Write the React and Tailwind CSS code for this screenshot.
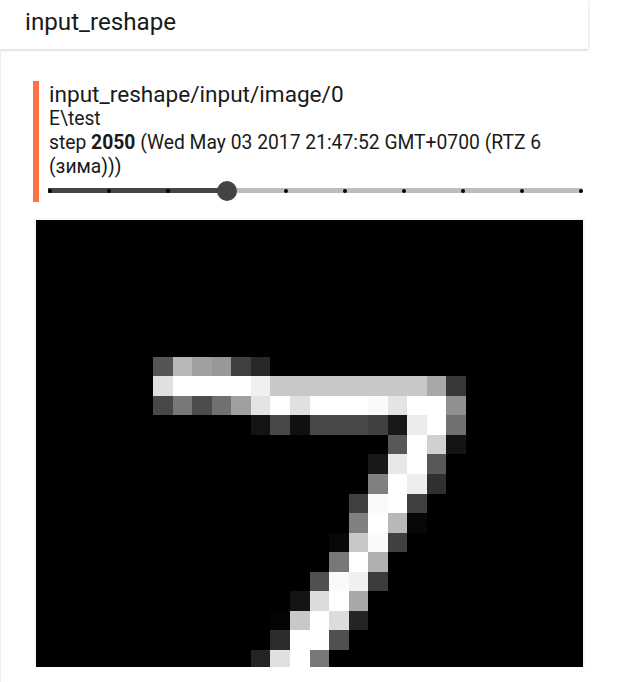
const rows = {
  7: [6, ['55', 'b8', 'a0', '98', '40', '28']],
  8: [6, ['e0', 'ff', 'ff', 'ff', 'ff', 'f0', 'c8', 'c8', 'c8', 'c8', 'c8', 'c8', 'c8', 'c8', 'a8', '38']],
  9: [6, ['48', '78', '4c', '70', 'a0', 'e4', 'ff', 'e0', 'ff', 'ff', 'ff', 'fa', 'e4', 'ff', 'ff', '90']],
  10: [11, ['14', '48', '10', '48', '48', '48', '40', '18', 'ec', 'ff', '70']],
  11: [18, ['58', 'ff', 'd0', '14']],
  12: [17, ['18', 'e8', 'ff', '58']],
  13: [17, ['80', 'ff', 'ee', '30']],
  14: [16, ['40', 'fa', 'ff', '40']],
  15: [16, ['80', 'ff', 'b8', '08']],
  16: [15, ['08', 'c8', 'fa', '40']],
  17: [15, ['78', 'ff', 'b0']],
  18: [14, ['50', 'fa', 'f0', '3c']],
  19: [13, ['14', 'dc', 'ff', 'a8']],
  20: [12, ['04', 'c8', 'ff', 'dc', '24']],
  21: [12, ['2c', 'ff', 'ff', '50']],
  22: [11, ['24', 'e0', 'ff', '78']],
};

function Digit() {
  const cell = 547 / 28;
  return (
    <svg width="547" height="447" viewBox="0 0 547 447" shapeRendering="crispEdges" className="block bg-black">
      {Object.entries(rows).map(([row, [start, values]]) =>
        values.map((v, i) => (
          <rect
            key={row + '-' + i}
            x={(start + i) * cell}
            y={row * cell}
            width={cell}
            height={cell}
            fill={'#' + v + v + v}
          />
        ))
      )}
    </svg>
  );
}

function Slider() {
  const ticks = [0, 1, 2, 3, 4, 5, 6, 7, 8, 9];
  return (
    <div className="relative h-[5px] mt-[9px] -ml-[1px] w-[534px] bg-[#bdbdbd]">
      <div className="h-full w-[179px] bg-[#444444]" />
      {ticks.map((t) => (
        <span
          key={t}
          className="absolute top-[0.5px] w-[4px] h-[4px] rounded-full bg-black"
          style={{ left: t * 59 }}
        />
      ))}
      <span className="absolute left-[169px] top-[-7px] w-[20px] h-[20px] rounded-full bg-[#444444]" />
    </div>
  );
}

export default function App() {
  return (
    <div className="w-[627px] h-[682px] bg-white overflow-hidden font-['Roboto',sans-serif] text-[#1a1a1a]">
      <div className="w-[588px] h-[49px] flex items-center pl-[25px] pb-[5px] text-[24.2px] shadow-[0_1px_3px_rgba(0,0,0,0.2)]">
        input_reshape
      </div>
      <div className="w-[588px] h-[633px] pl-[32px] pt-[32px] border-l border-[#ececec]">
        <div className="flex h-[121px]">
          <div className="w-[6px] bg-[#ff7043]" />
          <div className="pl-[10px] w-[541px]">
            <div className="text-[22.6px] leading-[27px]">input_reshape/input/image/0</div>
            <div className="text-[19.3px] leading-[24px] -mt-[1px]">
              <div>E\test</div>
              <div>
                step <b>2050</b> (Wed May 03 2017 21:47:52 GMT+0700 (RTZ 6 (зима)))
              </div>
            </div>
            <Slider />
          </div>
        </div>
        <div className="mt-[16px] ml-[1px] w-[551px] border-2 border-b-0 border-[#f7f7f7]">
          <Digit />
        </div>
      </div>
    </div>
  );
}
